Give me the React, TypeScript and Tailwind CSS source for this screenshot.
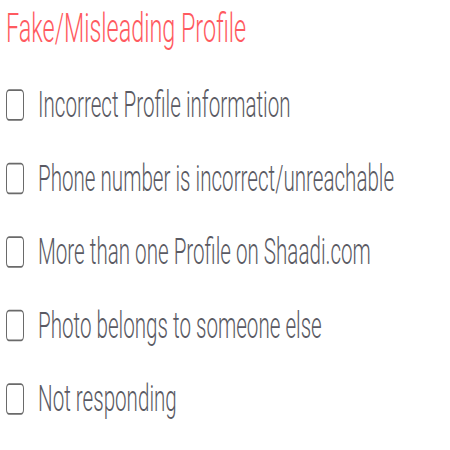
import React from "react";

const items = [
  "Incorrect Profile information",
  "Phone number is incorrect/unreachable",
  "More than one Profile on Shaadi.com",
  "Photo belongs to someone else",
  "Not responding",
];

export default function App() {
  return (
    <div className="w-[450px] h-[450px] bg-white overflow-hidden">
      <div
        className="origin-top-left scale-y-[1.75] pl-[6px]"
        style={{ fontFamily: "Roboto, 'Liberation Sans', sans-serif" }}
      >
        <div className="h-[39px] pt-[3px] text-[23.4px] leading-[26px] font-light text-[#ff5a60]">
          Fake/Misleading Profile
        </div>
        {items.map((t) => (
          <div key={t} className="h-[42px] flex items-center gap-[14px]">
            <div className="w-[18px] h-[18px] rounded-[3px] border-[1.5px] border-[#6a6a6a] shrink-0" />
            <span className="text-[20.6px] leading-[24px] font-light text-[#5a5a63] whitespace-nowrap">{t}</span>
          </div>
        ))}
      </div>
    </div>
  );
}
